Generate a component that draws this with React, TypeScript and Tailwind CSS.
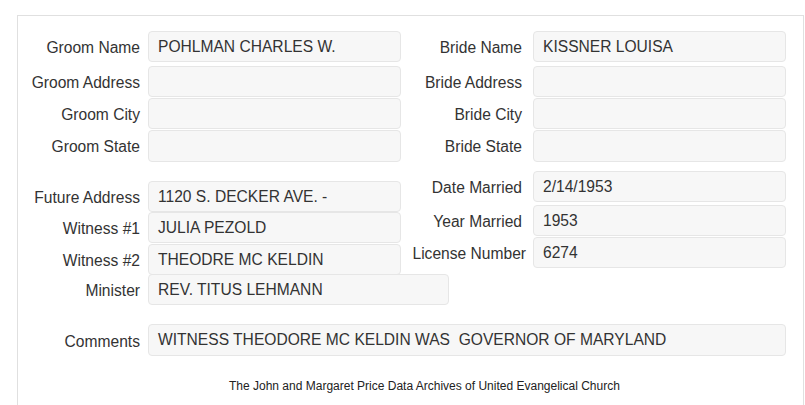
import React from 'react'

type Row = { label: string; value: string; mt: string; h: string; lab?: string }

const groom: Row[] = [
  { label: 'Groom Name', value: 'POHLMAN CHARLES W.', mt: 'mt-0', h: 'h-[31px]' },
  { label: 'Groom Address', value: '', mt: 'mt-[4px]', h: 'h-[31px]' },
  { label: 'Groom City', value: '', mt: 'mt-[1px]', h: 'h-[31px]' },
  { label: 'Groom State', value: '', mt: 'mt-[1px]', h: 'h-[32px]' },
]

const bride: Row[] = [
  { label: 'Bride Name', value: 'KISSNER LOUISA', mt: 'mt-0', h: 'h-[31px]' },
  { label: 'Bride Address', value: '', mt: 'mt-[4px]', h: 'h-[31px]' },
  { label: 'Bride City', value: '', mt: 'mt-[1px]', h: 'h-[31px]' },
  { label: 'Bride State', value: '', mt: 'mt-[1px]', h: 'h-[32px]' },
]

const lower: Row[] = [
  { label: 'Future Address', value: '1120 S. DECKER AVE. -', mt: 'mt-[10px]', h: 'h-[31px]' },
  { label: 'Witness #1', value: 'JULIA PEZOLD', mt: 'mt-0', h: 'h-[31px]' },
  { label: 'Witness #2', value: 'THEODRE MC KELDIN', mt: 'mt-[1px]', h: 'h-[31px]' },
]

const married: Row[] = [
  { label: 'Date Married', value: '2/14/1953', mt: 'mt-0', h: 'h-[31px]' },
  { label: 'Year Married', value: '1953', mt: 'mt-[3px]', h: 'h-[31px]' },
  { label: 'License Number', value: '6274', mt: 'mt-[1px]', h: 'h-[31px]', lab: '-mr-[4px]' },
]

const Field = ({ value, className }: { value: string; className: string }) => (
  <div
    className={`flex items-center rounded-[4px] border border-[#e6e6e6] bg-[#f7f7f7] pl-[9px] text-[15.6px] text-[#333] ${className}`}
  >
    {value}
  </div>
)

const FormRow = ({ row, labelW, gap }: { row: Row; labelW: string; gap: string }) => (
  <div className={`flex items-center ${row.mt}`}>
    <div className={`${labelW} ${gap} pt-[2px] text-right text-[15.6px] text-[#333]`}>
      <span className={`relative ${row.lab ? 'left-[4px]' : ''}`}>{row.label}</span>
    </div>
    <Field value={row.value} className={`w-[253px] ${row.h}`} />
  </div>
)

export default function App() {
  return (
    <div className="h-[405px] w-[805px] overflow-hidden bg-white font-['Liberation_Sans',Arial,sans-serif]">
      <div className="ml-[17px] mt-[15px] h-[420px] w-[787px] border border-[#e0e0e0] pt-[15px]">
        {/* Groom / Bride */}
        <div className="flex">
          <div className="flex flex-col">
            {groom.map((r) => (
              <FormRow key={r.label} row={r} labelW="w-[122px]" gap="mr-[8px]" />
            ))}
          </div>
          <div className="flex flex-col">
            {bride.map((r) => (
              <FormRow key={r.label} row={r} labelW="w-[121px]" gap="mr-[11px]" />
            ))}
          </div>
        </div>

        {/* Address / witnesses / marriage */}
        <div className="mt-[9px] flex">
          <div className="flex flex-col">
            {lower.map((r) => (
              <FormRow key={r.label} row={r} labelW="w-[122px]" gap="mr-[8px]" />
            ))}
          </div>
          <div className="flex flex-col">
            {married.map((r) => (
              <FormRow key={r.label} row={r} labelW="w-[121px]" gap="mr-[11px]" />
            ))}
          </div>
        </div>
        <div className="-mt-[1px] flex items-center">
          <div className="mr-[8px] w-[122px] pt-[2px] text-right text-[15.6px] text-[#333]">Minister</div>
          <Field value="REV. TITUS LEHMANN" className="h-[31px] w-[301px]" />
        </div>

        <div className="mt-[19px] flex items-center">
          <div className="mr-[8px] w-[122px] pt-[3px] text-right text-[15.6px] text-[#333]">Comments</div>
          <Field value="WITNESS THEODORE MC KELDIN WAS  GOVERNOR OF MARYLAND" className="h-[32px] w-[638px] whitespace-pre" />
        </div>

        <div className="mt-[21px] pl-[211px] text-[12px] text-[#222]">
          The John and Margaret Price Data Archives of United Evangelical Church
        </div>
      </div>
    </div>
  )
}
